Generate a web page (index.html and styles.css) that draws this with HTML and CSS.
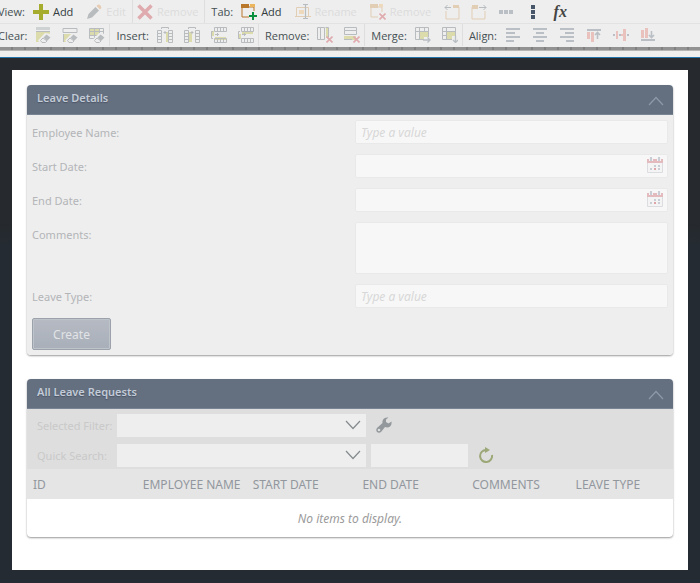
FILE: index.html
```html
<!DOCTYPE html>
<html lang="en">
	<head>
		<meta charset="UTF-8" />
		<meta name="viewport" content="width=device-width, initial-scale=1.0" />
		<title>Leave Requests</title>
		<link rel="stylesheet" href="styles.css">
	</head>
	<body>
		<!-- shared icon parts -->
		<svg class="defs" aria-hidden="true">
			<symbol id="eraser" viewBox="0 0 16 16">
				<path d="M3 13.500L10 6l6 1v9H5z" fill="#eee" />
				<path d="M8.500 10.500l3-3 4 3-3.500 3.500z" fill="#b9bcbe" />
				<path d="M8 11l-2.500 2.500 1.500 2h3.500L12 14z" fill="#eee" stroke="#b9bcbe" />
			</symbol>
			<symbol id="cross" viewBox="0 0 7 7">
				<path d="M.5.5l6 6M6.500.5l-6 6" stroke="#e0abae" stroke-width="1.600" />
			</symbol>
			<symbol id="cols" viewBox="0 0 16 16">
				<path d="M.5 3.500h4v12h-4zM11.500 3.500h4v12h-4zM.5 6.500h4M.5 9.500h4M.5 12.500h4M11.500 6.500h4M11.500 9.500h4M11.500 12.500h4" fill="none" stroke="#b9bcbe" />
				<path d="M4.500 2V.5h7V2M6.500 5.500h3M8 4v3" fill="none" stroke="#b9bcbe" />
			</symbol>
			<symbol id="rows" viewBox="0 0 16 16">
				<path d="M3.500.5h12v4h-12zM3.500 11.500h12v4h-12zM6.500.5v4M9.500.5v4M12.500.5v4M6.500 11.500v4M9.500 11.500v4M12.500 11.500v4" fill="none" stroke="#b9bcbe" />
				<path d="M2 4.500H.5v7H2M4 7.500h4M6.500 6v3" fill="none" stroke="#b9bcbe" />
			</symbol>
			<symbol id="calendar" viewBox="0 0 16 16">
				<path d="M.5 5v10.500h15V5" fill="#f4f4f4" stroke="#dcdde0" />
				<path d="M0 2h16v4H0z" fill="#e3babd" />
				<path d="M2 0h4v4H2zM10 0h4v4h-4z" fill="#f4f4f4" />
				<path d="M3 0h2v4H3zM11 0h2v4h-2z" fill="#c9ced6" />
				<path d="M7 8h2v2H7zM11 8h2v2h-2zM3 11h2v2H3zM11 11h2v2h-2z" fill="#c9ced6" />
				<path d="M7 11h2v2H7z" fill="#dea4a8" />
			</symbol>
			<symbol id="up" viewBox="0 0 16 10">
				<path d="M1 9l7-7.500L15 9" fill="none" stroke="currentColor" stroke-width="1.200" />
			</symbol>
			<symbol id="down" viewBox="0 0 16 10">
				<path d="M1 1l7 7.500L15 1" fill="none" stroke="currentColor" stroke-width="1.200" />
			</symbol>
		</svg>

		<header class="toolbar">
			<div class="row">
				<div class="group">
					<span class="name">View:</span>
					<button class="tool"><svg viewBox="0 0 16 16"><path d="M6 0h4v6h6v4h-6v6H6v-6H0V6h6z" fill="#a6ad2e" /></svg>Add</button>
					<button class="tool off"><svg viewBox="0 0 16 16"><path d="M1 15l1.500-5 7-7L13 6.500l-7 7z" fill="#b9bcbe" /><path d="M10.500 2l1-1q1.500-1 3 .5t.5 3l-1 1z" fill="#e8cdb5" /></svg>Edit</button>
				</div>
				<div class="group">
					<button class="tool off"><svg viewBox="0 0 16 16"><path d="M1.500 1.500l13 13M14.500 1.500l-13 13" stroke="#dfabae" stroke-width="3.500" /></svg>Remove</button>
				</div>
				<div class="group last">
					<span class="name">Tab:</span>
					<button class="tool"><svg viewBox="0 0 16 16"><path d="M1 3h12v10H1z" fill="none" stroke="#b9772c" /><path d="M0 0h8v4H0z" fill="#b9772c" /><path d="M9 0h5v3H9z" fill="#ecb65c" /><path d="M8 7h8v9H8z" fill="#eee" /><path d="M11 8h2v3h3v2h-3v3h-2v-3H8v-2h3z" fill="#0a8f3f" /></svg>Add</button>
					<button class="tool off"><svg viewBox="0 0 16 16"><path d="M0 12.500h16M1.500 12V3.500h12V12" fill="none" stroke="#e2cdb5" /><path d="M4 6h5v4H4z" fill="#eed9bd" /><path d="M8 .5h5M8 14.500h5M10.500 1v13" stroke="#b9bcbe" stroke-width="1.200" /></svg>Rename</button>
					<button class="tool off"><svg viewBox="0 0 16 16"><path d="M1 3h11v10H1z" fill="none" stroke="#e2cdb5" /><path d="M0 0h8v4H0z" fill="#e2cdb5" /><path d="M9 0h4v3H9z" fill="#eed9bd" /><path d="M8 8h8v8H8z" fill="#eee" /><use href="#cross" x="9" y="9" width="7" height="7" /></svg>Remove</button>
					<button class="icon tan" aria-label="Move tab left"><svg viewBox="0 0 16 16"><path d="M2 7v8h13V3H9" fill="none" stroke="currentColor" /><path d="M9 1h6v3H9z" fill="currentColor" /><path d="M1 3.500h6M3.500 1L1 3.500 3.500 6" fill="none" stroke="#b9bcbe" /></svg></button>
					<button class="icon tan" aria-label="Move tab right"><svg viewBox="0 0 16 16"><path d="M1 3v12h13V7" fill="none" stroke="currentColor" /><path d="M1 1h6v4H1z" fill="currentColor" /><path d="M8 3.500h7M12.500 1L15 3.500 12.500 6" fill="none" stroke="#b9bcbe" /></svg></button>
					<button class="icon" aria-label="Horizontal layout"><svg viewBox="0 0 16 16"><path d="M1 6h4v4H1zM6 6h4v4H6zM11 6h4v4h-4z" fill="#b9bfc4" /></svg></button>
					<button class="icon" aria-label="Vertical layout"><svg viewBox="0 0 16 16"><path d="M6 1h4v4H6zM6 6h4v4H6zM6 11h4v4H6z" fill="#485669" /></svg></button>
					<button class="icon fx" aria-label="Expression">fx</button>
				</div>
			</div>
			<div class="row">
				<div class="group">
					<span class="name">Clear:</span>
					<button class="icon" aria-label="Clear header"><svg viewBox="0 0 16 16"><path d="M1 0h14v3H1z" fill="#cfd2d3" /><path d="M1 4h14v11H1z" fill="#dbdbac" /><path d="M1 4.500h14" stroke="#b9bcbe" /><use href="#eraser" width="16" height="16" /></svg></button>
					<button class="icon" aria-label="Clear section"><svg viewBox="0 0 16 16"><path d="M1 1.500h14v4H1z" fill="none" stroke="#b9bcbe" /><path d="M1 7h14v8H1z" fill="#dbdbac" /><path d="M1.500 15V7" stroke="#b9bcbe" /><use href="#eraser" width="16" height="16" /></svg></button>
					<button class="icon" aria-label="Clear cells"><svg viewBox="0 0 16 16"><path d="M1 1h9v7H1z" fill="#dbdbac" /><path d="M.5 1.500h14v10H.5zM5.500 1v10M10.500 1v10M1 4.500h14M1 8.500h14" fill="none" stroke="#b9bcbe" /><use href="#eraser" width="16" height="16" /></svg></button>
				</div>
				<div class="group">
					<span class="name">Insert:</span>
					<button class="icon" aria-label="Insert column left"><svg viewBox="0 0 16 16"><path d="M9 5h3v10H9z" fill="#dbdbac" /><use href="#cols" width="16" height="16" /></svg></button>
					<button class="icon" aria-label="Insert column right"><svg viewBox="0 0 16 16"><path d="M4 5h4v10H4z" fill="#dbdbac" /><use href="#cols" width="16" height="16" /></svg></button>
					<button class="icon" aria-label="Insert row above"><svg viewBox="0 0 16 16"><path d="M0 4h3v5H0zM4 10h11v3H4z" fill="#dbdbac" /><use href="#rows" width="16" height="16" /></svg></button>
					<button class="icon" aria-label="Insert row below"><svg viewBox="0 0 16 16"><path d="M0 7h3v5H0zM4 4h11v3H4z" fill="#dbdbac" /><use href="#rows" width="16" height="16" /></svg></button>
				</div>
				<div class="group">
					<span class="name">Remove:</span>
					<button class="icon" aria-label="Remove column"><svg viewBox="0 0 16 16"><path d="M9 1h3v10H9z" fill="#dbdbac" /><path d="M.5.5h3v12h-3zM3.500.5h4v12h-4zM8.500.5h3v10" fill="none" stroke="#b9bcbe" /><use href="#cross" x="9" y="9" width="7" height="7" /></svg></button>
					<button class="icon" aria-label="Remove row"><svg viewBox="0 0 16 16"><path d="M0 9h12v4H0z" fill="#dbdbac" /><path d="M.5.5h12v3H.5zM.5 3.500h12v4H.5zM0 12.500h8" fill="none" stroke="#b9bcbe" /><use href="#cross" x="9" y="9" width="7" height="7" /></svg></button>
				</div>
				<div class="group">
					<span class="name">Merge:</span>
					<button class="icon" aria-label="Merge right"><svg viewBox="0 0 16 16"><path d="M5 4h9v9H5z" fill="#dbdbac" /><path d="M.5.5h13v12H.5zM4.500 1v12M.5 4.500h13M9.500 1v3" fill="none" stroke="#b9bcbe" /><path d="M9 10h7v6H9z" fill="#eee" /><path d="M8 13h7M12.500 10.500L15 13l-2.500 2.500" fill="none" stroke="#b9bfc4" stroke-width="1.300" /></svg></button>
					<button class="icon" aria-label="Merge down"><svg viewBox="0 0 16 16"><path d="M5 4h9v9H5z" fill="#dbdbac" /><path d="M.5.5h13v12H.5zM4.500 1v12M.5 4.500h13M.5 8.500h4" fill="none" stroke="#b9bcbe" /><path d="M10 9h6v7h-6z" fill="#eee" /><path d="M13.500 9v6.500M11 13l2.500 2.500L16 13" fill="none" stroke="#b9bfc4" stroke-width="1.300" /></svg></button>
				</div>
				<div class="group last">
					<span class="name">Align:</span>
					<button class="icon" aria-label="Align left"><svg viewBox="0 0 16 16"><path d="M1 1h14v2H1zM1 5h9v2H1zM1 9h14v2H1zM1 13h8v2H1z" fill="#b9bfc4" /></svg></button>
					<button class="icon" aria-label="Align center"><svg viewBox="0 0 16 16"><path d="M1 1h14v2H1zM4 5h8v2H4zM1 9h14v2H1zM4 13h8v2H4z" fill="#b9bfc4" /></svg></button>
					<button class="icon" aria-label="Align right"><svg viewBox="0 0 16 16"><path d="M1 1h14v2H1zM6 5h9v2H6zM1 9h14v2H1zM7 13h8v2H7z" fill="#b9bfc4" /></svg></button>
					<button class="icon" aria-label="Align top"><svg viewBox="0 0 16 16"><path d="M1 2h14v2H1z" fill="#b9bfc4" /><path d="M1 5h3v7H1zM5 5h3v10H5z" fill="#e9c1bd" /><path d="M11.500 12V5.500M9 8l2.500-2.500L14 8" fill="none" stroke="#b9bfc4" stroke-width="1.600" /></svg></button>
					<button class="icon" aria-label="Align middle"><svg viewBox="0 0 16 16"><path d="M0 7h2v2H0zM6 7h2v2H6zM14 7h2v2h-2z" fill="#b9bfc4" /><path d="M3 4h2v8H3zM10 2h3v12h-3zM8 7h2v2H8z" fill="#e9c1bd" /></svg></button>
					<button class="icon" aria-label="Align bottom"><svg viewBox="0 0 16 16"><path d="M1 12h14v2H1z" fill="#b9bfc4" /><path d="M1 3h3v8H1zM5 1h3v10H5z" fill="#e9c1bd" /><path d="M11.500 4v6.500M9 8l2.500 2.500L14 8" fill="none" stroke="#b9bfc4" stroke-width="1.600" /></svg></button>
				</div>
			</div>
		</header>

		<main class="canvas">
			<div class="page">
				<section class="card">
					<div class="card-head">
						<h2>Leave Details</h2>
						<button class="toggle" aria-label="Collapse"><svg viewBox="0 0 16 10"><use href="#up" /></svg></button>
					</div>
					<form class="details">
						<label for="employee">Employee Name:</label>
						<input id="employee" class="field" type="text" placeholder="Type a value">
						<label for="start">Start Date:</label>
						<div class="date">
							<input id="start" class="field" type="text">
							<button type="button" class="pick" aria-label="Pick start date"><svg viewBox="0 0 16 16"><use href="#calendar" /></svg></button>
						</div>
						<label for="end">End Date:</label>
						<div class="date">
							<input id="end" class="field" type="text">
							<button type="button" class="pick" aria-label="Pick end date"><svg viewBox="0 0 16 16"><use href="#calendar" /></svg></button>
						</div>
						<label for="comments">Comments:</label>
						<textarea id="comments" class="field area"></textarea>
						<label for="type">Leave Type:</label>
						<input id="type" class="field" type="text" placeholder="Type a value">
						<button type="button" class="create">Create</button>
					</form>
				</section>

				<section class="card">
					<div class="card-head">
						<h2>All Leave Requests</h2>
						<button class="toggle" aria-label="Collapse"><svg viewBox="0 0 16 10"><use href="#up" /></svg></button>
					</div>
					<div class="filters">
						<div class="filter">
							<label for="filter">Selected Filter:</label>
							<div class="select">
								<select id="filter"><option></option></select>
								<svg viewBox="0 0 16 10"><use href="#down" /></svg>
							</div>
							<button class="icon action" aria-label="Filter settings"><svg viewBox="0 0 16 16"><path d="M15.500 4.500l-3 2-2.500-1.500V2.500L12.500.5Q10 0 8 1.500T6.500 6L1 11q-1.500 2 0 4 2 1.500 4 0l4-5q3 1 5-.5t1.500-5z" fill="#92989b" /><circle cx="3" cy="13" r="1.300" fill="#dedede" /></svg></button>
						</div>
						<div class="filter">
							<label for="search">Quick Search:</label>
							<div class="select">
								<select id="search"><option></option></select>
								<svg viewBox="0 0 16 10"><use href="#down" /></svg>
							</div>
							<input class="query" type="text" aria-label="Search text">
							<button class="icon action" aria-label="Refresh"><svg viewBox="0 0 16 16"><path d="M8 3a6 6 0 1 0 6 5" fill="none" stroke="#9ca878" stroke-width="2" /><path d="M7 0l5 3-5 3z" fill="#9ca878" /></svg></button>
						</div>
					</div>
					<table class="requests">
						<thead>
							<tr>
								<th>ID</th>
								<th>EMPLOYEE NAME</th>
								<th>START DATE</th>
								<th>END DATE</th>
								<th>COMMENTS</th>
								<th>LEAVE TYPE</th>
							</tr>
						</thead>
						<tbody>
							<tr>
								<td colspan="6">No items to display.</td>
							</tr>
						</tbody>
					</table>
				</section>
			</div>
		</main>
	</body>
</html>
```

FILE: styles.css
```css
* {
	margin: 0;
	padding: 0;
	box-sizing: border-box;
}
body {
	display: flex;
	flex-direction: column;
	min-height: 100vh;
	overflow-x: hidden;
	background-color: #242b32;
	font-family: "Noto Sans", "Open Sans", sans-serif;
	font-size: 12px;
}
button {
	border: none;
	background: none;
	font: inherit;
	color: inherit;
}
svg {
	display: block;
}
.defs {
	position: absolute;
	width: 0;
	height: 0;
}

/* toolbar */
.toolbar {
	height: 58px;
	background-color: #eee;
	border-bottom: 1px solid #2373ad;
	font-family: "Open Sans", sans-serif;
	font-size: 11px;
	color: #465053;
	overflow: hidden;
}
.toolbar::after {
	content: "";
	display: block;
	height: 3px;
	background: repeating-linear-gradient(90deg, #929292 0 11px, #808080 11px 13px);
	border-bottom: 1px solid #b4b4b4;
}
.row {
	display: flex;
	height: 24px;
	margin-left: -8px;
	border-bottom: 1px solid #e2e2e2;
}
.row + .row {
	height: 23px;
	padding-bottom: 1px;
	border-bottom: none;
}
.group {
	display: flex;
	align-items: center;
	gap: 11px;
	padding: 0 4px;
	border-right: 1px solid #dedede;
}
.group.last {
	border-right: none;
}
.name {
	margin-right: -3px;
	padding-left: 2px;
	white-space: nowrap;
}
.tool {
	display: flex;
	align-items: center;
	gap: 4px;
	padding-right: 2px;
	color: #333c40;
}
.tool svg,
.icon svg {
	width: 16px;
	height: 16px;
}
.tool.off {
	color: #dcdcdc;
}
.icon {
	width: 16px;
	height: 16px;
}
.tan {
	color: #e2cdb5;
}
.fx {
	font: italic bold 16px/16px "Liberation Serif", serif;
	color: #444;
}

/* page */
.canvas {
	display: flex;
	flex: 1;
	padding: 12px 12px 13px;
	background: linear-gradient(#26292d 160px, #242b32 190px);
}
.page {
	display: flex;
	flex: 1;
	flex-direction: column;
	gap: 24px;
	padding: 15px;
	background-color: #fff;
}
.card {
	border-radius: 4px;
	background-color: #fff;
	box-shadow: 0 1px 2px #999;
	overflow: hidden;
}
.card-head {
	display: flex;
	justify-content: space-between;
	height: 30px;
	padding: 0 9px 0 10px;
	background-color: #646f80;
	border-bottom: 1px solid #788393;

	h2 {
		font-size: 11px;
		font-weight: 600;
		line-height: 26px;
		color: #c2cbd7;
		text-shadow: 0 1px 1px #4c5665;
	}
}
.toggle {
	padding-top: 2px;
	color: #8e99a8;

	svg {
		width: 16px;
		height: 10px;
	}
}

/* leave details */
.details {
	display: grid;
	grid-template-columns: 1fr 1fr;
	gap: 10px;
	padding: 5px;
	background-color: #eee;
	color: #b3b5b8;

	label {
		padding-top: 2px;
		font-size: 11px;
		line-height: 22px;
	}
}
.field {
	display: block;
	width: 100%;
	height: 24px;
	padding: 0 5px;
	border: 1px solid #e9e9e9;
	border-radius: 2px;
	background-color: #f7f7f7;
	font: inherit;
	color: #888;
}
.field::placeholder {
	font-style: italic;
	color: #d8d8d8;
}
.area {
	height: 52px;
	resize: none;
}
.date {
	position: relative;
}
.pick {
	position: absolute;
	top: 3px;
	right: 5px;

	svg {
		width: 16px;
		height: 16px;
	}
}
.create {
	width: 79px;
	height: 32px;
	border: 1px solid #9ba2ac;
	border-radius: 2px;
	background: linear-gradient(#b5bac3, #a9afb9);
	box-shadow: inset 0 0 0 1px #bfc4cb;
	color: #e1e3e6;
}

/* leave requests */
.filters {
	display: flex;
	flex-direction: column;
	gap: 6px;
	padding: 4px 10px 2px;
	background-color: #dedede;
	color: #c9c9c9;
}
.filter {
	display: flex;
	align-items: center;
	gap: 5px;
	height: 24px;

	label {
		min-width: 75px;
		font-size: 11px;
	}
}
.select {
	position: relative;

	select {
		display: block;
		width: 249px;
		height: 23px;
		border: none;
		appearance: none;
		background-color: #eee;
	}
	svg {
		position: absolute;
		top: 6px;
		right: 5px;
		width: 16px;
		height: 10px;
		color: #858b8e;
		pointer-events: none;
	}
}
.query {
	width: 97px;
	height: 23px;
	border: none;
	background-color: #eee;
}
.action {
	margin-left: 5px;
}
.requests {
	width: 100%;
	table-layout: fixed;
	border-collapse: collapse;

	th {
		width: 17%;
		height: 30px;
		padding-left: 6px;
		background-color: #e5e5e5;
		font-weight: normal;
		text-align: left;
		white-space: nowrap;
		color: #92979e;
	}
	th:nth-child(n + 5) {
		width: 16%;
	}
	td {
		height: 38px;
		font-style: italic;
		text-align: center;
		color: #9b9b9b;
	}
}
```
